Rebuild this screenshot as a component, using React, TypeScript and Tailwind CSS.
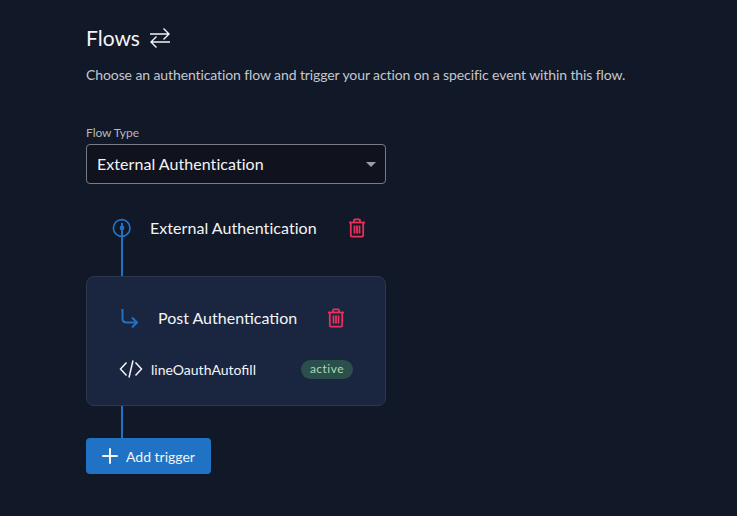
import { Plus } from "lucide-react";

function TrashIcon() {
  return (
    <svg width="18" height="20" viewBox="0 0 18 20" fill="none" stroke="#e8305a" strokeWidth="1.8">
      <path d="M1 4.500h16" />
      <path d="M6 4.500V2.200c0-.5.4-.9.9-.9h4.200c.5 0 .9.4.9.9v2.300" />
      <path d="M2.800 4.500v13c0 .7.500 1.200 1.200 1.200h10c.7 0 1.200-.5 1.200-1.200v-13" />
      <path d="M6.500 7.500v8M9 7.500v8M11.500 7.500v8" />
    </svg>
  );
}

export default function App() {
  return (
    <div
      className="h-[516px] w-[737px] overflow-hidden bg-[#111827] pl-[86px] pt-[24px] text-white"
      style={{ fontFamily: "Lato, sans-serif" }}
    >
      <div className="flex h-[28px] items-center gap-[10px]">
        <h1 className="text-[21px] leading-[28px] text-[#f3f4f6]">Flows</h1>
        <svg width="20" height="20" viewBox="0 0 20 20" fill="none" stroke="#f3f4f6" strokeWidth="1.400">
          <path d="M0 6h19M13.500 .5 19 6l-5.500 5.500" />
          <path d="M20 14H1M6.500 8.500 1 14l5.500 5.500" />
        </svg>
      </div>
      <p className="mt-[13px] text-[14px] leading-[20px] tracking-[-0.1px] text-[#c4c7cc]">
        Choose an authentication flow and trigger your action on a specific event within this flow.
      </p>

      <label className="mt-[40px] block text-[12px] leading-[16px] tracking-[-0.05px] text-[#b4b7bd]">Flow Type</label>
      <div className="mt-[3px] flex h-[40px] w-[300px] items-center justify-between rounded-[4px] border border-[#777c85] bg-[#10131e] pl-[10px] pr-[9px]">
        <span className="text-[16px] tracking-[0.05px] text-[#f3f4f6]">External Authentication</span>
        <span className="h-0 w-0 border-x-[5px] border-t-[5px] border-x-transparent border-t-[#9a9da3]" />
      </div>

      <div className="mt-[34px] flex h-[20px] items-center">
        <svg className="ml-[26px]" width="20" height="20" viewBox="0 0 20 20" fill="none">
          <circle cx="9.700" cy="10" r="8.300" stroke="#1f72c4" strokeWidth="1.700" />
          <path d="M10 5v15" stroke="#1f72c4" strokeWidth="2" />
          <circle cx="10" cy="10" r="2.400" fill="#1f72c4" />
        </svg>
        <span className="ml-[18px] text-[16px] tracking-[0.05px] text-[#f3f4f6]">External Authentication</span>
        <span className="ml-[31px] flex">
          <TrashIcon />
        </span>
      </div>
      <div className="ml-[35px] h-[38px] w-[2px] bg-[#1f72c4]" />

      <div className="h-[130px] w-[300px] rounded-[8px] border border-[#2c384d] bg-[#1a2640] px-[32px]">
        <div className="mt-[31px] flex h-[20px] items-center">
          <svg width="20" height="20" viewBox="0 0 20 20" fill="none" stroke="#1f72c4" strokeWidth="2">
            <path d="M3.500 1v9.500c0 2.500 1.500 4 4 4H18" />
            <path d="M13 9.500l5 5-5 5" />
          </svg>
          <span className="ml-[19px] text-[16px] text-[#f3f4f6]">Post Authentication</span>
          <span className="ml-[30px] flex">
            <TrashIcon />
          </span>
        </div>
        <div className="mt-[31px] flex h-[20px] items-center">
          <svg width="24" height="20" viewBox="0 0 24 20" fill="none" stroke="#f3f4f6" strokeWidth="1.500">
            <path d="M7.500 3.500 1.500 10l6 6.500M16.500 3.500l6 6.500-6 6.500M14 1.500l-4 17" />
          </svg>
          <span className="ml-[8px] text-[14px] text-[#f3f4f6]">lineOauthAutofill</span>
          <span className="ml-auto flex h-[19px] w-[52px] items-center justify-center rounded-full bg-[#2b4f4a] text-[12px] tracking-[0.5px] text-[#a8dcb5]">
            active
          </span>
        </div>
      </div>
      <div className="ml-[35px] h-[32px] w-[2px] bg-[#1f72c4]" />

      <button className="flex h-[36px] w-[125px] items-center rounded-[4px] bg-[#1f72c4] pl-[12px] text-[14px] text-[#f3f4f6]">
        <Plus size={24} strokeWidth={2} className="mr-[4px]" />
        Add trigger
      </button>
    </div>
  );
}
